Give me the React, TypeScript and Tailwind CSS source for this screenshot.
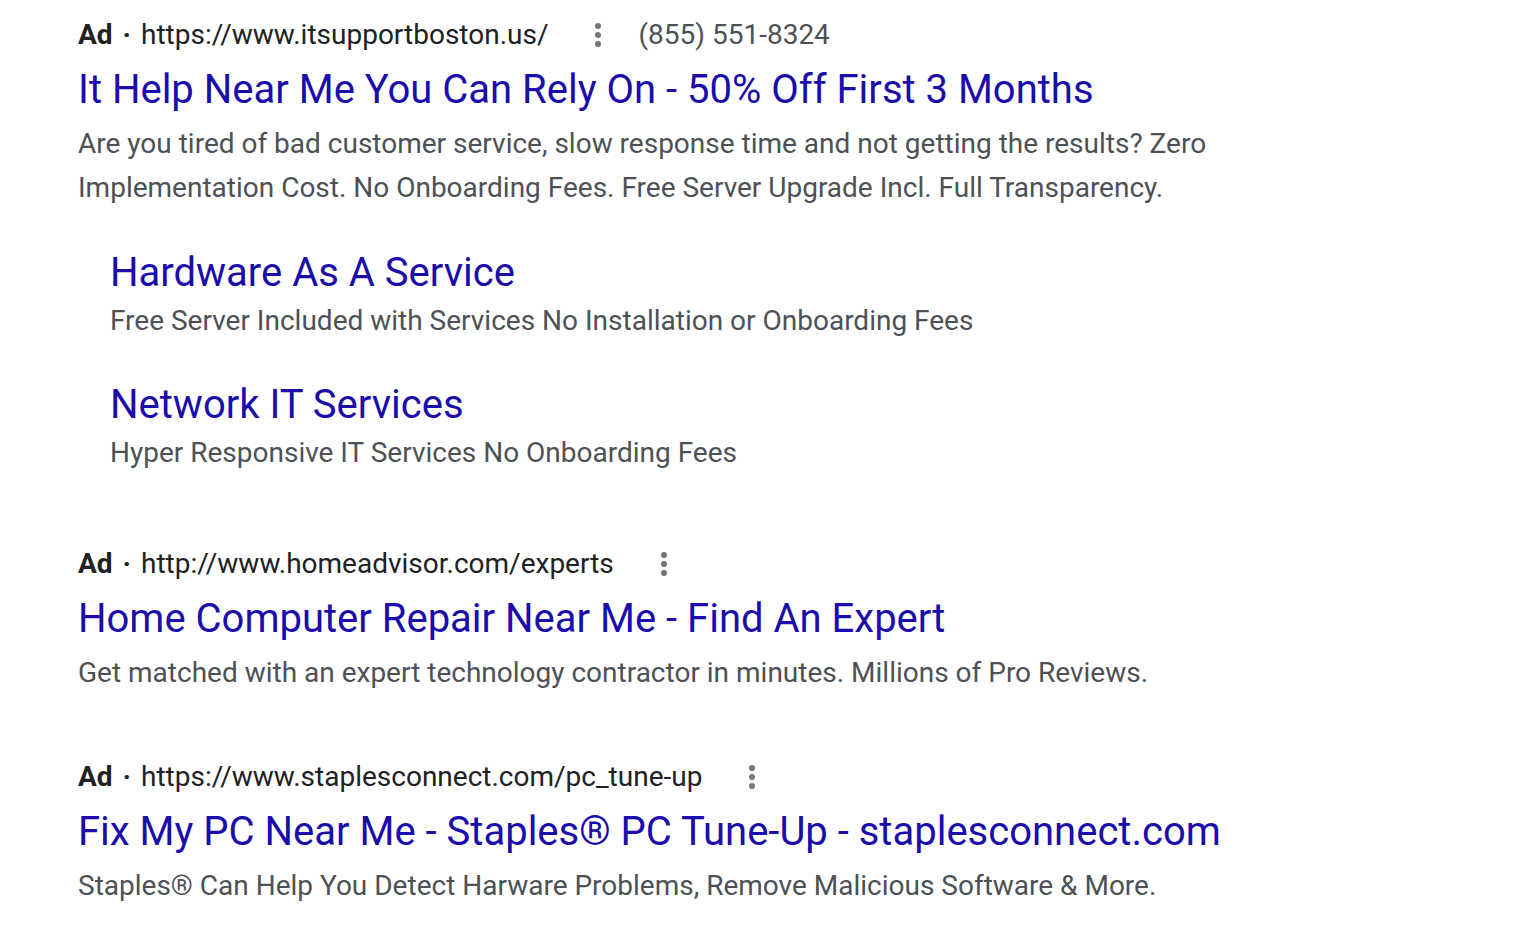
import React from 'react';

type Sitelink = { title: string; desc: string };

type Ad = {
  url: string;
  phone?: string;
  title: string;
  desc: string[];
  sitelinks?: Sitelink[];
};

const ads: Ad[] = [
  {
    url: 'https://www.itsupportboston.us/',
    phone: '(855) 551-8324',
    title: 'It Help Near Me You Can Rely On - 50% Off First 3 Months',
    desc: [
      'Are you tired of bad customer service, slow response time and not getting the results? Zero',
      'Implementation Cost. No Onboarding Fees. Free Server Upgrade Incl. Full Transparency.',
    ],
    sitelinks: [
      { title: 'Hardware As A Service', desc: 'Free Server Included with Services No Installation or Onboarding Fees' },
      { title: 'Network IT Services', desc: 'Hyper Responsive IT Services No Onboarding Fees' },
    ],
  },
  {
    url: 'http://www.homeadvisor.com/experts',
    title: 'Home Computer Repair Near Me - Find An Expert',
    desc: ['Get matched with an expert technology contractor in minutes. Millions of Pro Reviews.'],
  },
  {
    url: 'https://www.staplesconnect.com/pc_tune-up',
    title: 'Fix My PC Near Me - Staples® PC Tune-Up - staplesconnect.com',
    desc: ['Staples® Can Help You Detect Harware Problems, Remove Malicious Software & More.'],
  },
];

function MoreDots() {
  return (
    <svg width="8" height="26" viewBox="0 0 8 26" className="ml-[46px] shrink-0">
      <circle cx="4" cy="4" r="3" fill="#70757a" />
      <circle cx="4" cy="13" r="3" fill="#70757a" />
      <circle cx="4" cy="22" r="3" fill="#70757a" />
    </svg>
  );
}

function AdBlock({ ad }: { ad: Ad }) {
  return (
    <div>
      {/* Ad header line */}
      <div className="flex items-center h-[44px] text-[28px] text-[#202124]">
        <span className="font-bold">Ad</span>
        <span className="mx-[10px] font-bold">·</span>
        <span>{ad.url}</span>
        <MoreDots />
        {ad.phone && <span className="ml-[36px] text-[#4d5156]">{ad.phone}</span>}
      </div>
      <div className="mt-[7px] h-[52px] leading-[52px] text-[40px] text-[#1a0dab] whitespace-nowrap">{ad.title}</div>
      <div className="mt-[6px] text-[28px] leading-[44px] text-[#4d5156]">
        {ad.desc.map(line => (
          <div key={line} className="whitespace-nowrap">{line}</div>
        ))}
      </div>
      {ad.sitelinks && (
        <div className="pl-[32px] pt-[37px] flex flex-col gap-[36px]">
          {ad.sitelinks.map(s => (
            <div key={s.title}>
              <div className="h-[52px] leading-[52px] text-[40px] text-[#1a0dab]">{s.title}</div>
              <div className="h-[44px] leading-[44px] text-[28px] text-[#4d5156]">{s.desc}</div>
            </div>
          ))}
        </div>
      )}
    </div>
  );
}

export default function App() {
  return (
    <div className="min-h-screen bg-white pl-[78px] pt-[13px]" style={{ fontFamily: 'Roboto, "Liberation Sans", sans-serif' }}>
      <AdBlock ad={ads[0]} />
      <div className="mt-[67px]">
        <AdBlock ad={ads[1]} />
      </div>
      <div className="mt-[60px]">
        <AdBlock ad={ads[2]} />
      </div>
    </div>
  );
}
